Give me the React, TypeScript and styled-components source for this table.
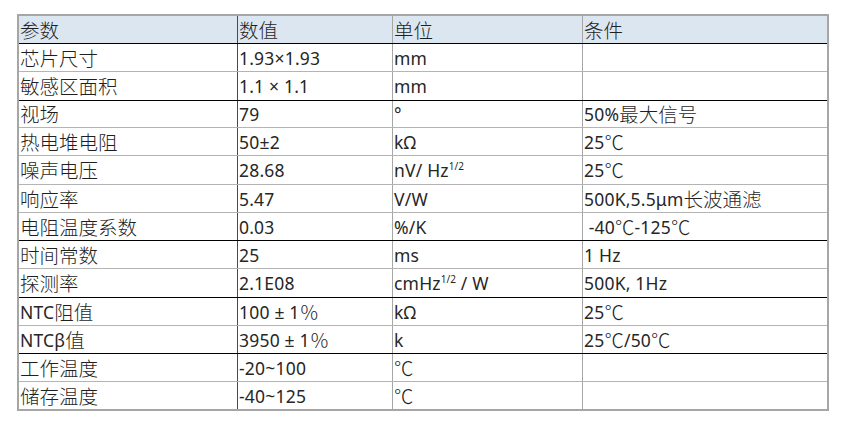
import React from "react";
import styled, { createGlobalStyle } from "styled-components";

const GlobalStyle = createGlobalStyle`
  html, body { margin: 0; padding: 0; background: #ffffff; }
  body {
    font-family: "Noto Sans", "Noto Sans CJK SC", sans-serif;
    color: #262626;
  }
`;

const Page = styled.div`
  padding: 14px 0 0 17px;
`;

const Table = styled.div`
  display: flex;
  flex-direction: column;
  width: max-content;
  border: 2px solid #a6a6a6;
`;

const Row = styled.div<{ $h: number; $line: string; $head?: boolean }>`
  display: grid;
  grid-template-columns: 219px 155px 190px 244px;
  box-sizing: border-box;
  height: ${(p) => p.$h}px;
  border-bottom: 1px solid ${(p) => p.$line};
  background: ${(p) => (p.$head ? "#dce6f1" : "#ffffff")};
  &:last-child { border-bottom: none; }
`;

const Cell = styled.div<{ $divider?: string }>`
  display: flex;
  align-items: center;
  padding: 0 0 0 1px;
  white-space: pre;
  font-size: 17.5px;
  font-weight: 400;
  letter-spacing: 0.2px;
  line-height: 22px;
  border-right: ${(p) => (p.$divider ? `1px solid ${p.$divider}` : "none")};
`;

const Han = styled.span`
  font-family: "Noto Sans CJK SC", sans-serif;
  font-size: 19.5px;
  font-weight: 300;
  letter-spacing: 0;
  color: #1f1f1f;
`;

const Sup = styled.sup`
  font-size: 10px;
  vertical-align: 7px;
  line-height: 0;
  letter-spacing: 0;
`;

const HAN_RE = /([\u2100-\u214f\u3000-\u303f\u4e00-\u9fff\uff00-\uffef]+)/;

function Txt({ s }: { s: string }) {
  const parts = s.split(HAN_RE);
  return (
    <>
      {parts.map((p, i) =>
        i % 2 === 1 ? <Han key={i}>{p}</Han> : p ? <React.Fragment key={i}>{p}</React.Fragment> : null
      )}
    </>
  );
}

type CellVal = string | { pre: string; sup: string; post?: string };

const BLACK = "#000000";
const GRAY = "#b4b4b4";

const rows: { cells: CellVal[]; h: number; line: string }[] = [
  { cells: ["参数", "数值", "单位", "条件"], h: 28, line: BLACK },
  { cells: ["芯片尺寸", "1.93×1.93", "mm", ""], h: 28, line: GRAY },
  { cells: ["敏感区面积", "1.1 × 1.1", "mm", ""], h: 29, line: BLACK },
  { cells: ["视场", "79", "°", "50%最大信号"], h: 27, line: GRAY },
  { cells: ["热电堆电阻", "50±2", "kΩ", "25℃"], h: 28, line: GRAY },
  { cells: ["噪声电压", "28.68", { pre: "nV/ Hz", sup: "1/2" }, "25℃"], h: 29, line: GRAY },
  { cells: ["响应率", "5.47", "V/W", "500K,5.5μm长波通滤"], h: 28, line: GRAY },
  { cells: ["电阻温度系数", "0.03", "%/K", " -40℃-125℃"], h: 28, line: BLACK },
  { cells: ["时间常数", "25", "ms", "1 Hz"], h: 28, line: GRAY },
  { cells: ["探测率", "2.1E08", { pre: "cmHz", sup: "1/2", post: " / W" }, "500K, 1Hz"], h: 29, line: BLACK },
  { cells: ["NTC阻值", "100 ± 1％", "kΩ", "25℃"], h: 28, line: GRAY },
  { cells: ["NTCβ值", "3950 ± 1％", "k", "25℃/50℃"], h: 28, line: BLACK },
  { cells: ["工作温度", "-20~100", "℃", ""], h: 28, line: GRAY },
  { cells: ["储存温度", "-40~125", "℃", ""], h: 27, line: GRAY },
];

const dividers = ["#4a4a4a", "#a6a6a6", "#a6a6a6", undefined];

function CellContent({ v }: { v: CellVal }) {
  if (typeof v === "string") return <Txt s={v} />;
  return (
    <span>
      <Txt s={v.pre} />
      <Sup>{v.sup}</Sup>
      {v.post ? <Txt s={v.post} /> : null}
    </span>
  );
}

export default function App() {
  return (
    <>
      <GlobalStyle />
      <Page>
        <Table>
          {rows.map((r, i) => (
            <Row key={i} $h={r.h} $line={r.line} $head={i === 0}>
              {r.cells.map((c, j) => (
                <Cell key={j} $divider={dividers[j]}>
                  <CellContent v={c} />
                </Cell>
              ))}
            </Row>
          ))}
        </Table>
      </Page>
    </>
  );
}
